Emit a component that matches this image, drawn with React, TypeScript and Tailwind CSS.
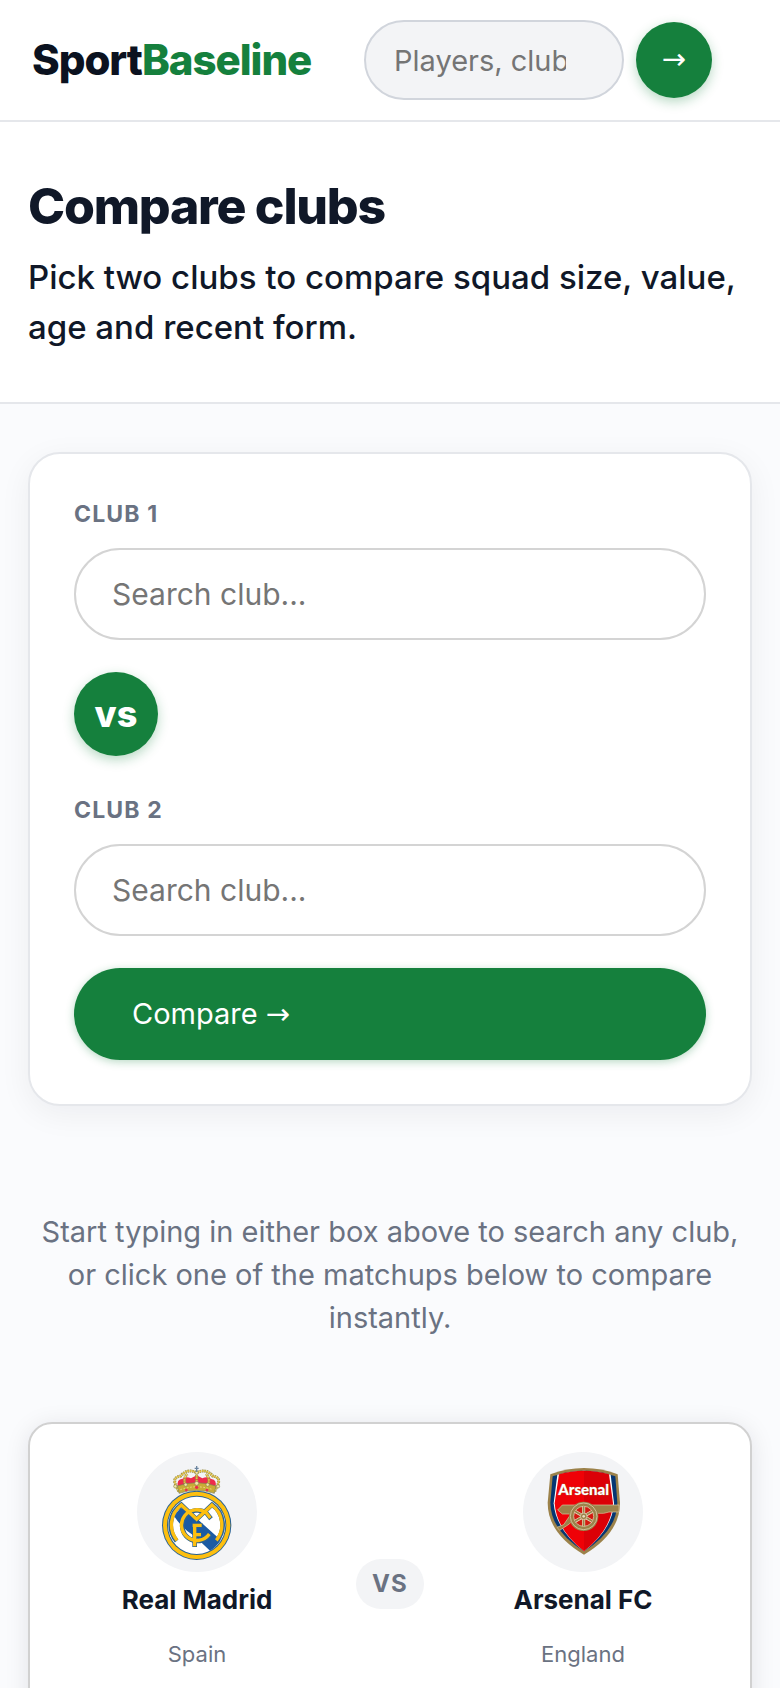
import React, { useState } from 'react';

interface Club {
  name: string;
  country: string;
  crest: React.ReactNode;
}

const RealMadridCrest: React.FC = () => (
  <svg viewBox="53 36 360 360" className="size-full" aria-hidden="true">
    {/* crown */}
    <path d="M178 158 L168 132 Q160 112 184 108 Q204 84 232 96 Q260 84 280 108 Q304 112 296 132 L286 158 Q232 146 178 158Z" fill="#f3f4f6" />
    <path d="M176 140 Q170 118 190 116 Q200 108 215 115 L232 106 L249 115 Q264 108 276 117 Q294 120 288 140 Q232 126 176 140Z" fill="#ee2a4c" />
    <g fill="none" stroke="#9a8f45" strokeWidth="9" strokeDasharray="5 2">
      <path d="M178 154 L168 132 Q160 112 184 108 Q204 84 232 98" />
      <path d="M286 154 L296 132 Q304 112 280 108 Q260 84 232 98" />
      <path d="M202 142 Q188 118 204 102 M262 142 Q276 118 260 102 M232 98 V144" />
    </g>
    <g fill="none" stroke="#e5c13b" strokeWidth="5" strokeDasharray="5 2">
      <path d="M178 154 L168 132 Q160 112 184 108 Q204 84 232 98" />
      <path d="M286 154 L296 132 Q304 112 280 108 Q260 84 232 98" />
      <path d="M202 142 Q188 118 204 102 M262 142 Q276 118 260 102 M232 98 V144" />
    </g>
    <path d="M174 138 Q232 118 290 138 L285 160 Q232 142 179 160Z" fill="#c9ab35" stroke="#7c8058" strokeWidth="2" />
    <path d="M183 149 Q232 132 281 149" fill="none" stroke="#f3d985" strokeWidth="3" strokeDasharray="5 5" />
    <g fill="#ee2a4c">
      <circle cx="201" cy="150" r="4" />
      <circle cx="232" cy="142" r="5" />
      <circle cx="263" cy="150" r="4" />
    </g>
    <g fill="#f4e7a8" stroke="#8b8550" strokeWidth="2">
      <circle cx="168" cy="139" r="5" />
      <circle cx="296" cy="139" r="5" />
      <circle cx="199" cy="134" r="5" />
      <circle cx="265" cy="134" r="5" />
      <circle cx="232" cy="130" r="6" />
      <circle cx="232" cy="98" r="5" />
    </g>
    <path d="M232 78 V96 M226 85 H238" stroke="#6c86a0" strokeWidth="4" />
    {/* roundel */}
    <circle cx="232" cy="256" r="104" fill="#2a6293" />
    <circle cx="232" cy="256" r="101" fill="#fdbf0f" />
    <circle cx="232" cy="256" r="89" fill="#2a6293" />
    <circle cx="232" cy="256" r="86" fill="#fff" />
    <path d="M164 228 L184 203 Q210 214 235 238 L304 300 A86 86 0 0 1 272 332 L228 290 Q190 268 164 228Z" fill="#1c5ba3" />
    <g fill="none">
      <g stroke="#2a6293" strokeWidth="14">
        <path d="M275 236 L262 220 A46 46 0 1 0 272 284" />
        <path d="M172 303 A74 74 0 0 1 186 194 L232 238 L278 194 A74 74 0 0 1 292 303" />
        <path d="M226 321 V249 M218 256 H249 M226 284 H247" />
      </g>
      <g stroke="#fdbf0f" strokeWidth="10">
        <path d="M273 234 L262 220 A46 46 0 1 0 270 282" />
        <path d="M173 301 A74 74 0 0 1 186 195 L232 238 L278 195 A74 74 0 0 1 291 301" />
        <path d="M226 319 V251 M220 256 H247 M226 284 H245" />
      </g>
    </g>
  </svg>
);

const ArsenalCrest: React.FC = () => (
  <svg viewBox="66 36 360 360" className="size-full" aria-hidden="true">
    <path d="M148 103 Q198 84 249 84 Q302 84 350 103 L357 188 Q357 280 249 344 Q140 280 140 188Z" fill="#9c824a" />
    <path d="M155 109 Q202 92 249 92 Q296 92 343 109 L349 188 Q348 272 249 334 Q149 272 148 188Z" fill="#063672" />
    <path d="M169 104 Q208 93 249 92 Q290 93 329 104 L339 190 Q334 268 249 334 Q164 268 158 190Z" fill="#fff" />
    <path d="M174 103 Q210 92 249 92 V334 Q166 268 161 190Z" fill="#ef0107" />
    <path d="M324 103 Q288 92 249 92 V334 Q332 268 336 190Z" fill="#db0007" />
    {/* cannon */}
    <path d="M170 210 L184 195 H354 V216 H324 L308 220 H290 L276 232 H222 L205 252 L176 271 L168 262 L188 254 L210 222 H184Z" fill="#9c824a" stroke="#d9c8a0" strokeWidth="2" />
    <circle cx="248" cy="229" r="44" fill="#9c824a" />
    <circle cx="248" cy="229" r="40" fill="none" stroke="#e9ddbf" strokeWidth="2" />
    <circle cx="248" cy="229" r="30" fill="#d31a10" stroke="#e9ddbf" strokeWidth="2" />
    <path d="M248 199 V259 M222 214 L274 244 M274 214 L222 244" stroke="#e9ddbf" strokeWidth="9" />
    <path d="M248 199 V259 M222 214 L274 244 M274 214 L222 244" stroke="#9c824a" strokeWidth="5" />
    <circle cx="248" cy="229" r="10" fill="#9c824a" stroke="#e9ddbf" strokeWidth="2" />
    <circle cx="248" cy="229" r="4" fill="#e9ddbf" />
    <text x="248" y="165" textAnchor="middle" className="fill-white stroke-[#9c824a] stroke-2 font-['Lato',sans-serif] text-[45px] font-black [paint-order:stroke]">
      Arsenal
    </text>
  </svg>
);

const matchup: [Club, Club] = [
  { name: 'Real Madrid', country: 'Spain', crest: <RealMadridCrest /> },
  { name: 'Arsenal FC', country: 'England', crest: <ArsenalCrest /> }
];

const Arrow: React.FC = () => <span className="font-['DejaVu_Sans',sans-serif]">→</span>;

const ClubField: React.FC<{ id: string; label: string; value: string; onChange: (v: string) => void }> = ({
  id,
  label,
  value,
  onChange
}) => (
  <div className="flex flex-col gap-4">
    <label htmlFor={id} className="text-[23px]/9 font-bold tracking-wider text-gray-500 uppercase">
      {label}
    </label>
    <input
      id={id}
      type="text"
      value={value}
      onChange={(e) => onChange(e.target.value)}
      placeholder="Search club..."
      className="h-[92px] w-full rounded-full border-2 border-[#d4d4d4] bg-white px-9 text-[30px] placeholder:text-[#757575] focus:outline-none"
    />
  </div>
);

const ClubColumn: React.FC<{ club: Club }> = ({ club }) => (
  <div className="flex min-w-0 flex-col items-center pb-11">
    <div className="size-[120px] overflow-hidden rounded-full bg-gray-100">{club.crest}</div>
    <span className="mt-2 text-[26px]/10 font-bold text-gray-900">{club.name}</span>
    <span className="mt-4 text-[22px]/9 text-gray-500">{club.country}</span>
  </div>
);

const App: React.FC = () => {
  const [query, setQuery] = useState('');
  const [clubOne, setClubOne] = useState('');
  const [clubTwo, setClubTwo] = useState('');

  return (
    <div className="min-h-screen bg-[#fafbfd] font-['Inter',sans-serif] text-gray-900">
      <header className="flex items-center border-b-2 border-gray-200 bg-white px-8 py-5">
        <a href="#" className="text-[42px]/[48px] font-extrabold tracking-tight text-[#0b1220]">
          Sport<span className="text-[#15803d]">Baseline</span>
        </a>
        <form className="mr-9 ml-auto flex items-center gap-3" onSubmit={(e) => e.preventDefault()}>
          <input
            type="search"
            aria-label="Search"
            value={query}
            onChange={(e) => setQuery(e.target.value)}
            placeholder="Players, clubs..."
            className="h-20 w-[260px] rounded-full border-2 border-gray-300 bg-gray-100 pr-8 pl-7 text-[29px] placeholder:text-[#757575] focus:outline-none"
          />
          <button
            type="submit"
            aria-label="Submit search"
            className="flex size-[76px] items-center justify-center rounded-full bg-[#15803d] text-[29px] text-white shadow-[0_4px_12px_rgba(21,128,61,0.3)]"
          >
            <Arrow />
          </button>
        </form>
      </header>

      <section className="border-b-2 border-gray-200 bg-white px-7 pt-14 pb-[50px]">
        <h1 className="text-[50px]/[56px] font-extrabold tracking-tight">Compare clubs</h1>
        <p className="mt-[18px] text-[33px]/[50px] font-medium">
          Pick two clubs to compare squad size, value, age and recent form.
        </p>
      </section>

      <main className="px-7 pt-12">
        <form
          onSubmit={(e) => e.preventDefault()}
          className="flex flex-col gap-8 rounded-[32px] border-2 border-gray-200 bg-white px-11 pt-[42px] pb-11 shadow-[0_8px_32px_rgba(15,23,42,0.06)]"
        >
          <ClubField id="club-1" label="Club 1" value={clubOne} onChange={setClubOne} />
          <div className="mb-1 flex size-[84px] items-center justify-center rounded-full bg-[#15803d] text-4xl font-extrabold text-white shadow-[0_4px_12px_rgba(21,128,61,0.3)]">
            vs
          </div>
          <ClubField id="club-2" label="Club 2" value={clubTwo} onChange={setClubTwo} />
          <button
            type="submit"
            className="h-[92px] rounded-full bg-[#15803d] px-[58px] text-left text-[29px] text-white shadow-[0_2px_8px_rgba(21,128,61,0.3)]"
          >
            Compare <Arrow />
          </button>
        </form>

        <p className="mt-[104px] text-center text-[29px]/[43px] text-gray-500">
          Start typing in either box above to search any club, or click one of the matchups below to compare instantly.
        </p>

        <a
          href="#"
          className="mt-[83px] grid grid-cols-[1fr_auto_1fr] items-center gap-5 rounded-3xl border-2 border-[#d1d1d1] bg-white p-7 shadow-[0_4px_24px_rgba(15,23,42,0.1)]"
        >
          <ClubColumn club={matchup[0]} />
          <span className="rounded-full bg-gray-100 px-4 py-2 text-2xl/[34px] font-bold tracking-wider text-gray-500">VS</span>
          <ClubColumn club={matchup[1]} />
        </a>
      </main>
    </div>
  );
};

export default App;
